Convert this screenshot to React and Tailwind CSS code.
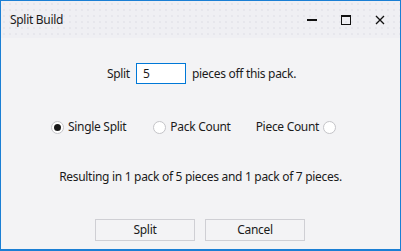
import React from "react";

function Radio({ checked }) {
  return (
    <span className="w-[13px] h-[13px] rounded-full border border-[#c4c4c8] bg-white flex items-center justify-center shrink-0">
      {checked && <span className="w-[7px] h-[7px] rounded-full bg-[#1a1a1a]" />}
    </span>
  );
}

export default function App() {
  return (
    <div className="w-[401px] h-[251px] border border-b-2 border-[#1a7fd4] bg-[#f3f3f5] flex flex-col text-[12px] tracking-[-0.3px] text-[#1b1b1b] [font-family:'Noto_Sans',sans-serif] overflow-hidden">
      <div className="h-[37px] shrink-0 flex items-center pl-[9px] bg-[#efeff3] bg-[radial-gradient(#dcdce2_0.6px,transparent_0.8px)] bg-[length:6px_6px]">
        <span>Split Build</span>
        <div className="ml-auto flex items-center h-full pr-[3px]">
          <div className="w-[34px] h-full flex items-center justify-center">
            <span className="w-[10px] h-[2px] bg-[#111]" />
          </div>
          <div className="w-[34px] h-full flex items-center justify-center">
            <span className="w-[10px] h-[10px] border border-t-2 border-[#111]" />
          </div>
          <div className="w-[34px] h-full flex items-center justify-center">
            <svg width="10" height="10" viewBox="0 0 10 10">
              <path d="M1 1L9 9M9 1L1 9" stroke="#111" strokeWidth="1.3" />
            </svg>
          </div>
        </div>
      </div>
      <div className="flex-1 flex flex-col">
        <div className="mt-[25px] flex items-center justify-center h-[21px] gap-[6px] pl-[2px]">
          <span>Split</span>
          <div className="w-[50px] h-[21px] border border-[#0078d7] bg-white flex items-center pl-[6px]">5</div>
          <span>pieces off this pack.</span>
        </div>
        <div className="mt-[35px] flex items-center h-[16px] pl-[50px]">
          <Radio checked />
          <span className="ml-[4px]">Single Split</span>
          <span className="ml-[27px]"><Radio /></span>
          <span className="ml-[4px]">Pack Count</span>
          <span className="ml-[25px]">Piece Count</span>
          <span className="ml-[4px]"><Radio /></span>
        </div>
        <div className="mt-[34px] h-[16px] flex items-center justify-center">
          Resulting in 1 pack of 5 pieces and 1 pack of 7 pieces.
        </div>
        <div className="mt-[34px] flex justify-center gap-[10px] pr-[1px]">
          <button className="w-[100px] h-[22px] border border-[#cfcfd4] bg-[#f3f3f5] flex items-center justify-center">Split</button>
          <button className="w-[100px] h-[22px] border border-[#cfcfd4] bg-[#f3f3f5] flex items-center justify-center">Cancel</button>
        </div>
      </div>
    </div>
  );
}
